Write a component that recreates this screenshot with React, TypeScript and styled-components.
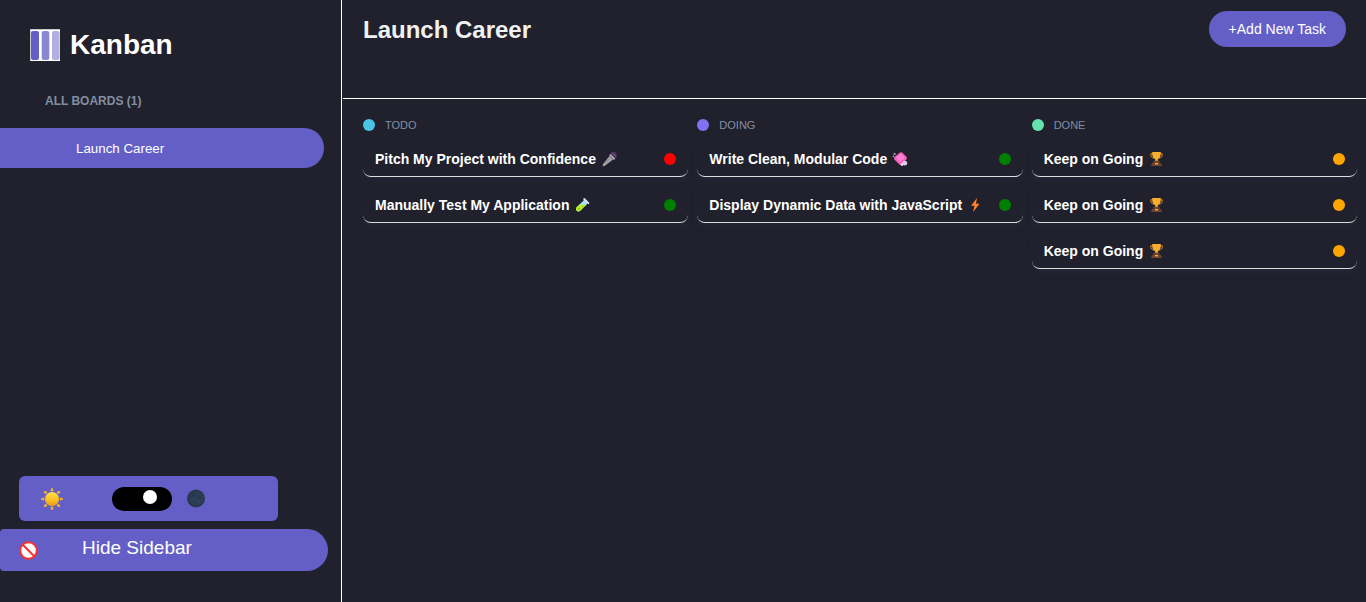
import React, { useState } from "react";
import styled, { createGlobalStyle } from "styled-components";

const GlobalStyle = createGlobalStyle`
  *, *::before, *::after { box-sizing: border-box; }
  body {
    margin: 0;
    background: #20212c;
    color: #fff;
    font-family: "Liberation Sans", Arial, sans-serif;
  }
  h1, h2, h3, p, ul { margin: 0; padding: 0; }
  ul { list-style: none; }
  button { font-family: inherit; cursor: pointer; }
`;

const Layout = styled.div`
  display: flex;
  gap: 1px;
  min-height: 100vh;
`;

const Sidebar = styled.aside`
  display: flex;
  flex-direction: column;
  flex: 0 0 342px;
  padding: 28px 13px 31px 0;
  border-right: 1px solid #fff;
`;

const Brand = styled.div`
  display: flex;
  align-items: center;
  gap: 10px;
  padding-left: 30px;
`;

const BrandName = styled.h1`
  font-size: 28px;
  line-height: 34px;
`;

const BoardsHeading = styled.h2`
  margin-top: 30px;
  padding-left: 45px;
  color: #828fa3;
  font-size: 12px;
  line-height: 18px;
`;

const BoardButton = styled.button`
  display: block;
  width: calc(100% - 4px);
  height: 40px;
  margin-top: 18px;
  padding: 0 76px;
  border: 0;
  border-radius: 0 20px 20px 0;
  background: #635fc7;
  color: #fff;
  text-align: left;
`;

const SidebarFooter = styled.div`
  display: flex;
  flex-direction: column;
  gap: 8px;
  margin-top: auto;
`;

const ThemePanel = styled.label`
  display: flex;
  align-items: center;
  height: 45px;
  margin: 0 50px 0 19px;
  padding-left: 21px;
  border-radius: 6px;
  background: #635fc7;
`;

const ThemeSwitch = styled.input`
  display: flex;
  appearance: none;
  width: 60px;
  height: 24px;
  margin: 0 14px 0 48px;
  padding: 3px;
  border-radius: 12px;
  background: #000;
  cursor: pointer;

  &::before {
    content: "";
    width: 14px;
    height: 14px;
    border-radius: 50%;
    background: #fff;
  }
  &:checked::before { margin-left: 28px; }
`;

const HideButton = styled.button`
  display: flex;
  align-items: flex-start;
  gap: 43px;
  height: 42px;
  padding: 8px 20px;
  border: 0;
  border-radius: 4px 21px 21px 4px;
  background: #635fc7;
  color: #fff;
  font-size: 19px;
  line-height: 22px;

  svg { margin: 4px 1px 0 -1px; }
`;

const Main = styled.main`
  flex: 1;
  min-width: 0;
`;

const Header = styled.header`
  display: flex;
  align-items: flex-start;
  justify-content: space-between;
  height: 99px;
  padding: 11px 20px;
  border-bottom: 1px solid #fff;
`;

const BoardTitle = styled.h2`
  color: #f1f1f1;
  font-size: 24px;
  line-height: 38px;
`;

const AddButton = styled.button`
  height: 36px;
  padding: 0 20px;
  border: 0;
  border-radius: 18px;
  background: #635fc7;
  color: #fff;
  font-size: 14px;
`;

const Columns = styled.div`
  display: grid;
  grid-template-columns: repeat(3, 1fr);
  gap: 9px;
  padding: 18px 9px 20px 20px;
`;

const ColumnHead = styled.div`
  display: flex;
  align-items: center;
  gap: 10px;
  height: 16px;
`;

const Dot = styled.span<{ $color: string }>`
  flex: none;
  width: 12px;
  height: 12px;
  border-radius: 50%;
  background: ${(p) => p.$color};
`;

const ColumnName = styled.h3`
  color: #828fa3;
  font-size: 11px;
  font-weight: 400;
  line-height: 16px;
`;

const Tasks = styled.ul`
  display: flex;
  flex-direction: column;
  gap: 10px;
  margin-top: 8px;
`;

const Task = styled.li`
  display: flex;
  align-items: center;
  min-height: 36px;
  padding: 0 12px;
  border-bottom: 1px solid #dcdcdc;
  border-radius: 8px;
  box-shadow: 0 4px 6px rgba(54, 78, 126, 0.1);

  ${Dot} { margin-left: auto; }
`;

const TaskTitle = styled.p`
  font-size: 14px;
  font-weight: 700;
  line-height: 20px;
`;

const TaskIcon = styled.svg`
  flex: none;
  width: 16px;
  height: 16px;
  margin-left: 5px;
`;

const Logo = () => (
  <svg width="30" height="32" viewBox="0 0 30 32" aria-hidden="true">
    <path d="M0 0h30v32H0z" fill="#fff" />
    <path d="M0 0h30v1H1v31H0z" fill="#c9c9cc" />
    <rect x="1" y="2" width="8" height="29" rx="2" fill="#635fc7" />
    <rect x="11.700" y="2" width="7.600" height="29" rx="2" fill="#8a87d2" />
    <rect x="22" y="2" width="7.600" height="29" rx="2" fill="#b1afe2" />
  </svg>
);

const Sun = () => (
  <svg width="24" height="24" viewBox="0 0 24 24" aria-hidden="true">
    <defs>
      <linearGradient id="sun" x2="0" y2="1">
        <stop stopColor="#ffe052" />
        <stop offset=".5" stopColor="#fcc521" />
        <stop offset="1" stopColor="#f39a13" />
      </linearGradient>
    </defs>
    {[0, 45, 90, 135, 180, 225, 270, 315].map((a) => (
      <path
        key={a}
        d="M12 1 13.200 3.800h-2.400z"
        fill="#fbb72f"
        stroke="#fbb72f"
        strokeWidth=".8"
        strokeLinejoin="round"
        transform={`rotate(${a} 12 12)`}
      />
    ))}
    <circle cx="12" cy="12" r="7" fill="url(#sun)" />
  </svg>
);

const Moon = () => (
  <svg width="20" height="20" viewBox="0 0 20 20" aria-hidden="true">
    <circle cx="10" cy="9.500" r="9" fill="#29384a" />
    <circle cx="10.500" cy="9.500" r="7.200" fill="#2c3e55" />
    <path d="M6 4c2-2 4-1 4 1s-2 1-3 3-4 1-3-1zM12 6l3 2-1 3-3-2z" fill="#27394f" />
    <circle cx="12.500" cy="12.500" r="1" fill="#35486a" />
    <circle cx="8" cy="10.500" r="1" fill="#33475f" />
  </svg>
);

const NoEntry = () => (
  <svg width="19" height="19" viewBox="0 0 19 19" aria-hidden="true">
    <circle cx="9.500" cy="9.500" r="8.300" fill="#fff" stroke="#f8312f" strokeWidth="2" />
    <path d="m4 4 11 11" stroke="#f8312f" strokeWidth="2" />
  </svg>
);

const icons = {
  mic: (
    <>
      <path d="M8.500 5 12 8.500 4.500 14.300q-1.500 1.300-2.500.7t.3-2.300z" fill="#a3a3a6" />
      <path d="m4 12 5-4.500" stroke="#86868b" />
      <path d="M9 3.500C10.500.7 13.500.3 15 2s1 4.800-2 6.500z" fill="#533566" />
      <path d="m8.800 3.600 4.800 4.800" stroke="#b9b6be" strokeWidth="1.600" />
      <path d="m11 1.500 3.800 3.500" stroke="#77628a" strokeWidth=".8" />
    </>
  ),
  tube: (
    <>
      <path d="m10.300 2.700 3.500 3.500-7.600 7.600c-1 1-2.500 1-3.500 0s-1-2.500 0-3.500z" fill="#a9dcf2" />
      <path d="M5.300 7.700h7L6.200 13.800c-1 1-2.500 1-3.500 0s-1-2.500 0-3.500z" fill="#b9f01f" />
      <path d="m10.200 2 4.200 4.200" stroke="#cdeefb" strokeWidth="1.800" strokeLinecap="round" />
      <circle cx="5" cy="11.800" r="1" fill="#85bd1e" />
      <circle cx="8.500" cy="9.500" r=".8" fill="#85bd1e" />
    </>
  ),
  soap: (
    <>
      <path d="M2.500 6 8 1.600q1.300-.8 2.400.2l4 4q1 1.200 0 2.400L10 13.400q-1.300 1-2.600 0L2.600 8.800q-1.200-1.400-.1-2.800z" fill="#fb5fc0" />
      <path d="m4 6.500 5-3.700 4 4-5 4.700z" fill="#ff7fd0" />
      <circle cx="2.600" cy="3" r="1.200" fill="#8d899f" />
      <circle cx="1.400" cy="5.400" r=".8" fill="#b3aec6" />
      <circle cx="12.800" cy="12.200" r="2.400" fill="#d9d1ec" />
      <circle cx="10" cy="13.600" r="1.300" fill="#eee4f8" />
    </>
  ),
  bolt: <path d="M10 1 4 8.800h3.500L6 15.200l6.500-8.400H9z" fill="#ff822d" />,
  trophy: (
    <>
      <path d="M5 2.800H2.700c0 3 1 4 3.300 4.200M12 2.800h2.300c0 3-1 4-3.300 4.200" fill="none" stroke="#d98a20" />
      <path d="M4.200 1h8.600c.2 4-.8 6.300-3 7.300V10.500H7.200V8.300c-2.200-1-3.200-3.300-3-7.300z" fill="#f9ad2b" />
      <path d="M5.500 9.800h6V12H13l1 3H3l1-3h1.500z" fill="#704331" />
      <path d="M7 12h3v1.400H7z" fill="#f9ad2b" />
    </>
  ),
};

type Item = { title: string; icon: keyof typeof icons; priority: string };

const going: Item = { title: "Keep on Going", icon: "trophy", priority: "orange" };

const board: { name: string; color: string; tasks: Item[] }[] = [
  {
    name: "TODO",
    color: "#49c4e5",
    tasks: [
      { title: "Pitch My Project with Confidence", icon: "mic", priority: "red" },
      { title: "Manually Test My Application", icon: "tube", priority: "green" },
    ],
  },
  {
    name: "DOING",
    color: "#8471f2",
    tasks: [
      { title: "Write Clean, Modular Code", icon: "soap", priority: "green" },
      { title: "Display Dynamic Data with JavaScript", icon: "bolt", priority: "green" },
    ],
  },
  { name: "DONE", color: "#67e2ae", tasks: [going, going, going] },
];

export default function App() {
  const [dark, setDark] = useState(true);

  return (
    <>
      <GlobalStyle />
      <Layout>
        <Sidebar>
          <Brand>
            <Logo />
            <BrandName>Kanban</BrandName>
          </Brand>
          <BoardsHeading>ALL BOARDS (1)</BoardsHeading>
          <BoardButton type="button">Launch Career</BoardButton>
          <SidebarFooter>
            <ThemePanel>
              <Sun />
              <ThemeSwitch
                type="checkbox"
                role="switch"
                aria-label="Dark theme"
                checked={dark}
                onChange={(e) => setDark(e.target.checked)}
              />
              <Moon />
            </ThemePanel>
            <HideButton type="button">
              <NoEntry />
              Hide Sidebar
            </HideButton>
          </SidebarFooter>
        </Sidebar>
        <Main>
          <Header>
            <BoardTitle>Launch Career</BoardTitle>
            <AddButton type="button">+Add New Task</AddButton>
          </Header>
          <Columns>
            {board.map((column) => (
              <section key={column.name}>
                <ColumnHead>
                  <Dot $color={column.color} />
                  <ColumnName>{column.name}</ColumnName>
                </ColumnHead>
                <Tasks>
                  {column.tasks.map((task, i) => (
                    <Task key={i}>
                      <TaskTitle>{task.title}</TaskTitle>
                      <TaskIcon viewBox="0 0 16 16" aria-hidden="true">
                        {icons[task.icon]}
                      </TaskIcon>
                      <Dot $color={task.priority} />
                    </Task>
                  ))}
                </Tasks>
              </section>
            ))}
          </Columns>
        </Main>
      </Layout>
    </>
  );
}
